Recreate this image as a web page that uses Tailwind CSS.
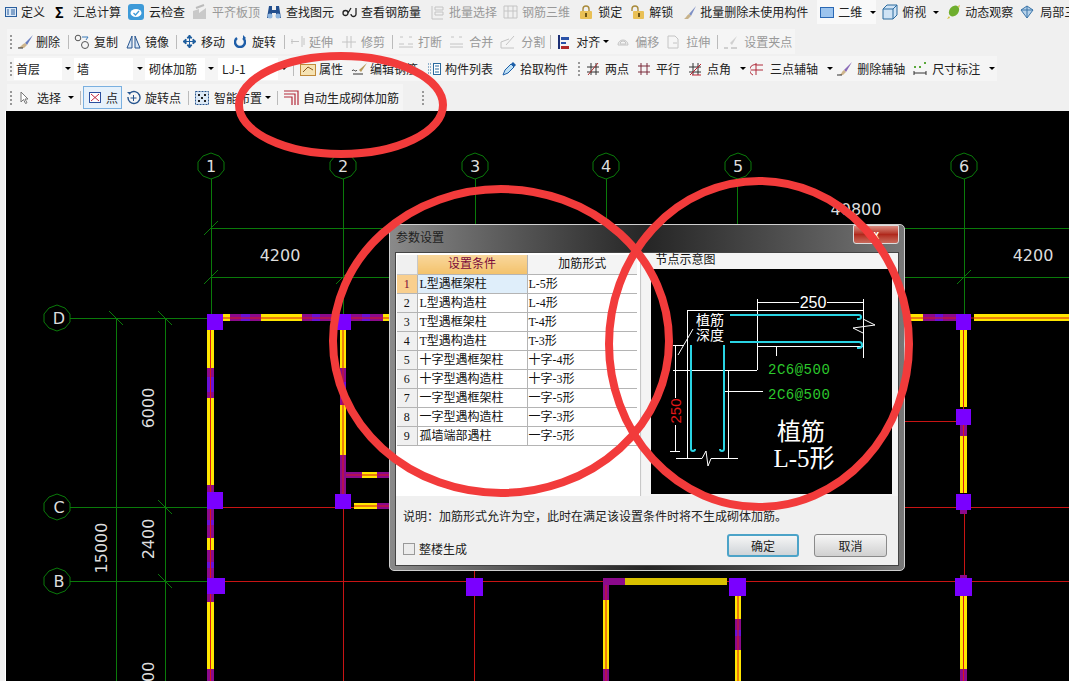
<!DOCTYPE html>
<html lang="zh-CN">
<head>
  <meta charset="UTF-8" />
  <title>参数设置</title>
  <script src="https://cdn.jsdelivr.net/npm/@tailwindcss/browser@4"></script>
</head>
<body class="overflow-hidden bg-[#f0f0f0]">
<div class="relative h-[681px] w-[1069px] overflow-hidden whitespace-nowrap bg-[#f0f0f0] font-['Noto_Sans_CJK_SC',sans-serif] text-[12px] leading-none text-[#222]">

  <!-- Row 1 -->
  <div class="flex h-[24px] items-center">
    <span class="ml-[5px] flex items-center gap-[4px]"><svg width="12" height="12"><rect x=".5" y="1.5" width="11" height="9" fill="#dbe8f6" stroke="#2b5f9e"/><path d="M6 4h4M6 6h4M6 8h4M2 4h2M2 6h2M2 8h2" stroke="#2b5f9e"/></svg>定义</span>
    <span class="ml-[10px] flex items-center gap-[10px]"><span class="w-[8px] text-[14px] font-bold text-black">Σ</span>汇总计算</span>
    <span class="ml-[7px] flex items-center gap-[5px]"><svg width="16" height="16"><rect width="16" height="16" rx="3" fill="#3d9ad8"/><ellipse cx="8" cy="9" rx="5.5" ry="4" fill="#fff"/><path d="M5.500 9l2 2 3.500-4" stroke="#3d9ad8" stroke-width="1.300" fill="none"/></svg>云检查</span>
    <span class="ml-[7px] flex items-center gap-[5px] text-[#999]"><svg width="15" height="16"><path d="M1 15V7l6-2v10zM7 9l7-5v11H7z" fill="#c9c9c9"/><path d="M4 4l8-3" stroke="#bbb" stroke-width="2"/></svg>平齐板顶</span>
    <span class="ml-[6px] flex items-center gap-[4px]"><svg width="16" height="15"><path d="M3 1h3v4h4V1h3l2 12H10V8H6v5H1z" fill="#234f8e"/><circle cx="4" cy="11" r="2.500" fill="#8fb6e0"/><circle cx="12" cy="11" r="2.500" fill="#8fb6e0"/></svg>查找图元</span>
    <span class="ml-[8px] flex items-center gap-[4px]"><svg width="15" height="12"><path d="M1 7a2.500 2.500 0 1 0 5 0a2.500 2.500 0 1 0-5 0M6 7l3-5M9 8a2.500 2.500 0 1 0 5 0V2" stroke="#222" stroke-width="1.300" fill="none"/></svg>查看钢筋量</span>
    <span class="ml-[10px] flex items-center gap-[5px] text-[#999]"><svg width="13" height="15"><path d="M1 1v13h11M4 2h8v3H4zM4 7h8v3H4z" fill="none" stroke="#c4c4c4"/></svg>批量选择</span>
    <span class="ml-[6px] flex items-center gap-[4px] text-[#999]"><svg width="15" height="14"><path d="M1 1h13v12H1zM5 1v12M10 1v12M1 6h13" fill="none" stroke="#c4c4c4"/></svg>钢筋三维</span>
    <span class="ml-[10px] flex items-center gap-[6px]"><svg width="12" height="14"><path d="M3 7V4a3 3 0 0 1 6 0v3" fill="none" stroke="#a98a3a" stroke-width="1.400"/><rect y="6" width="12" height="8" rx="1" fill="#e9c056"/><rect x="5" y="8" width="2" height="4" fill="#6b5314"/></svg>锁定</span>
    <span class="ml-[9px] flex items-center gap-[5px]"><svg width="13" height="14"><path d="M1 6V4a3 3 0 0 1 6 0v3" fill="none" stroke="#a98a3a" stroke-width="1.400"/><rect x="2" y="6" width="11" height="8" rx="1" fill="#e9c056"/><rect x="7" y="8" width="2" height="4" fill="#6b5314"/></svg>解锁</span>
    <span class="ml-[10px] flex items-center gap-[3px]"><svg width="14" height="15"><path d="M13 1L6 9l2 2z" fill="#7d8fc4"/><path d="M6 9l2 2-3 3H1c2-1 2-3 5-5z" fill="#c7b28a"/></svg>批量删除未使用构件</span>
    <span class="ml-[9px] flex h-[24px] w-[60px] items-center bg-[#f9f9f9] pl-[3px]"><svg width="14" height="11" class="mr-[4px]"><rect x=".5" y=".5" width="13" height="10" fill="#9cc4ee" stroke="#2a68b4"/></svg>二维<span class="ml-[8px] h-0 w-0 border-x-[3px] border-t-[3px] border-x-transparent border-t-black"></span></span>
    <span class="ml-[6px] flex items-center gap-[4px]"><svg width="16" height="16"><path d="M1 5l4-4h10v10l-4 4H1z" fill="#cfe3f5" stroke="#2a6a9e"/><path d="M1 5h10v10M11 5l4-4" stroke="#2a6a9e" fill="none"/></svg>俯视</span>
    <span class="ml-[7px] h-0 w-0 border-x-[3px] border-t-[3px] border-x-transparent border-t-black"></span>
    <span class="ml-[7px] flex items-center gap-[4px]"><svg width="15" height="16"><ellipse cx="8" cy="7" rx="4.500" ry="6" transform="rotate(40 8 7)" fill="#6fae2e"/><path d="M3 12l-2 3 3-1zM12 2l2-1-1 3" fill="#d4c23a"/></svg>动态观察</span>
    <span class="ml-[7px] flex items-center gap-[6px]"><svg width="14" height="14"><path d="M7 1l6 4-6 8-6-8z" fill="#b7d2ea" stroke="#3a74a8"/><path d="M1 5h12M7 1v12" stroke="#3a74a8"/></svg>局部三维</span>
  </div>

  <!-- Row 2 -->
  <div class="ml-[7px] mt-[5px] flex h-[25px] w-[788px] items-center bg-[#f5f5f5]">
    <span class="ml-[3px] h-[14px] w-[4px] border-l-2 border-dotted border-[#999]"></span>
    <span class="ml-[3px] flex items-center gap-[2px]"><svg width="17" height="15"><path d="M16 1L8 9l2 2z" fill="#6a7fc0"/><path d="M8 9l2 2-3 3H1c3-1 3-3 7-5z" fill="#cdb48c"/><path d="M1 14h5" stroke="#333"/></svg>删除</span>
    <span class="ml-[8px] h-[14px] w-px bg-[#bbb]"></span>
    <span class="ml-[5px] flex items-center gap-[4px]"><svg width="16" height="16"><circle cx="4" cy="4" r="2.800" fill="none" stroke="#555"/><circle cx="11" cy="11" r="3.500" fill="none" stroke="#555"/><path d="M8 3h6l-2 3" stroke="#3a7ab8" fill="none"/></svg>复制</span>
    <span class="ml-[8px] flex items-center gap-[4px]"><svg width="15" height="15"><path d="M6 2L1 14h5zM9 2l5 12H9z" fill="#dbe8f6" stroke="#27558f"/></svg>镜像</span>
    <span class="ml-[7px] h-[14px] w-px bg-[#bbb]"></span>
    <span class="ml-[5px] flex items-center gap-[4px]"><svg width="15" height="15"><path d="M7.500 1v13M1 7.500h13M7.500 1L5 4h5zM7.500 14L5 11h5zM1 7.500L4 5v5zM14 7.500L11 5v5z" stroke="#1f5e9e" fill="#1f5e9e"/></svg>移动</span>
    <span class="ml-[9px] flex items-center gap-[6px]"><svg width="12" height="13"><path d="M3 3a5 5 0 1 0 6 0" stroke="#1f5ea8" stroke-width="2.400" fill="none"/><path d="M9 0v5l3-2z" fill="#1f5ea8"/></svg>旋转</span>
    <span class="ml-[8px] h-[14px] w-px bg-[#bbb]"></span>
    <span class="ml-[5px] flex items-center gap-[4px] text-[#999]"><svg width="15" height="13"><path d="M1 6.500h8M12 1v11M14 3v7M2 4v5" stroke="#c4c4c4" fill="none"/></svg>延伸</span>
    <span class="ml-[8px] flex items-center gap-[4px] text-[#999]"><svg width="16" height="14"><path d="M1 7h14M6 1v12M10 1v12" stroke="#c4c4c4" fill="none"/></svg>修剪</span>
    <span class="ml-[7px] h-[14px] w-px bg-[#bbb]"></span>
    <span class="ml-[5px] flex items-center gap-[4px] text-[#999]"><svg width="16" height="13"><path d="M1 9h5M10 9h5M2 2h3M11 2h3M1 12h14" stroke="#c4c4c4" fill="none"/></svg>打断</span>
    <span class="ml-[7px] flex items-center gap-[5px] text-[#999]"><svg width="15" height="13"><path d="M1 9h13M2 2h3M10 2h3M1 12h13" stroke="#c4c4c4" fill="none"/></svg>合并</span>
    <span class="ml-[7px] flex items-center gap-[5px] text-[#999]"><svg width="16" height="14"><path d="M1 13h13M1 13V7l8-3M14 1L6 10" stroke="#c4c4c4" fill="none"/></svg>分割</span>
    <span class="ml-[5px] h-[14px] w-px bg-[#bbb]"></span>
    <span class="ml-[7px] flex items-center gap-[7px]"><svg width="11" height="14"><path d="M1 0v14" stroke="#1c2f74" stroke-width="2"/><rect x="3" y="2" width="8" height="3" fill="#2a52a8"/><rect x="3" y="7" width="5" height="2" fill="#2a52a8"/><rect x="3" y="11" width="8" height="3" fill="#b02a2a"/></svg>对齐</span>
    <span class="ml-[3px] h-0 w-0 border-x-[3px] border-t-[3px] border-x-transparent border-t-black"></span>
    <span class="ml-[7px] flex items-center gap-[5px] text-[#999]"><svg width="14" height="13"><path d="M2 10a5 5 0 1 1 10 0z" fill="none" stroke="#c4c4c4"/><path d="M4 9a3 3 0 1 1 6 0z" fill="none" stroke="#c4c4c4"/></svg>偏移</span>
    <span class="ml-[7px] flex items-center gap-[6px] text-[#999]"><svg width="14" height="14"><path d="M2 1h7l3 3v9H2z" fill="none" stroke="#c4c4c4"/><path d="M7 8h4" stroke="#c4c4c4"/></svg>拉伸</span>
    <span class="ml-[7px] h-[14px] w-px bg-[#bbb]"></span>
    <span class="ml-[5px] flex items-center gap-[5px] text-[#999]"><svg width="16" height="14"><path d="M14 1L7 8l2 2z" fill="#d0d0d0"/><path d="M1 13h4M8 13h6" stroke="#aaa"/></svg>设置夹点</span>
  </div>

  <!-- Row 3 -->
  <div class="ml-[7px] mt-[2px] flex h-[25px] w-[990px] items-center bg-[#f5f5f5]">
    <span class="ml-[3px] h-[14px] w-[4px] border-l-2 border-dotted border-[#999]"></span>
    <span class="flex h-[22px] w-[48px] items-center bg-white pl-[2px]">首层</span>
    <span class="ml-[3px] h-0 w-0 border-x-[3px] border-t-[3px] border-x-transparent border-t-black"></span>
    <span class="ml-[3px] flex h-[22px] w-[59px] items-center bg-white pl-[3px]">墙</span>
    <span class="ml-[4px] h-0 w-0 border-x-[3px] border-t-[3px] border-x-transparent border-t-black"></span>
    <span class="ml-[2px] flex h-[22px] w-[60px] items-center bg-white pl-[4px]">砌体加筋</span>
    <span class="ml-[3px] h-0 w-0 border-x-[3px] border-t-[3px] border-x-transparent border-t-black"></span>
    <span class="ml-[4px] flex h-[22px] w-[60px] items-center bg-white pl-[4px]">LJ-1</span>
    <span class="ml-[3px] h-0 w-0 border-x-[3px] border-t-[3px] border-x-transparent border-t-black"></span>
    <span class="ml-[6px] h-[14px] w-px bg-[#bbb]"></span>
    <span class="ml-[6px] flex items-center gap-[3px]"><svg width="16" height="14"><rect x=".5" y="2.500" width="15" height="11" fill="#f6e3b4" stroke="#c08a3a"/><path d="M3 10l5-5 5 3" stroke="#8a5a20" fill="none"/></svg>属性</span>
    <span class="ml-[8px] flex items-center gap-[2px]"><svg width="17" height="13"><path d="M1 9c2-3 3 2 5-1" stroke="#333" fill="none"/><path d="M16 1L8 8l2 2z" fill="#b89a5a"/><path d="M2 12h10" stroke="#333"/></svg>编辑钢筋</span>
    <span class="ml-[9px] flex items-center gap-[4px]"><svg width="14" height="14"><path d="M1 2h3M1 5h3M1 8h3M1 11h3" stroke="#2a6a9e" stroke-dasharray="1 1"/><rect x="6.500" y="1.500" width="7" height="11" fill="#fff" stroke="#2a6a9e"/><path d="M8 4h4M8 7h4M8 10h4" stroke="#2a6a9e"/></svg>构件列表</span>
    <span class="ml-[9px] flex items-center gap-[4px]"><svg width="14" height="15"><path d="M1 14l2-5 6-6 3 3-6 6z" fill="#bfe0f5" stroke="#1d5fa8"/><path d="M9 3l2-2 3 3-2 2z" fill="#1d5fa8"/></svg>拾取构件</span>
    <span class="ml-[10px] h-[14px] w-[4px] border-l-2 border-dotted border-[#999]"></span>
    <span class="ml-[4px] flex items-center gap-[5px]"><svg width="14" height="14"><path d="M5 1v12M10 1v12M1 5h12M1 10h12" stroke="#333" fill="none"/><path d="M2 13L12 1" stroke="#b03030"/></svg>两点</span>
    <span class="ml-[8px] flex items-center gap-[5px]"><svg width="14" height="14"><path d="M4 1v12M10 1v12M1 4h12M1 10h12" stroke="#7a2a3a" fill="none"/></svg>平行</span>
    <span class="ml-[8px] flex items-center gap-[4px]"><svg width="15" height="14"><path d="M5 1v12M10 1v12M1 5h12M1 10h12" stroke="#333" fill="none"/><path d="M2 13L13 2M4 13h9" stroke="#c02030"/></svg>点角</span>
    <span class="ml-[9px] h-0 w-0 border-x-[3px] border-t-[3px] border-x-transparent border-t-black"></span>
    <span class="ml-[4px] flex items-center gap-[6px]"><svg width="14" height="14"><path d="M3 13a4 4 0 0 1 4-10h6M1 8h12M6 1v12" stroke="#b02a3a" fill="none"/></svg>三点辅轴</span>
    <span class="ml-[9px] h-0 w-0 border-x-[3px] border-t-[3px] border-x-transparent border-t-black"></span>
    <span class="ml-[4px] flex items-center gap-[4px]"><svg width="16" height="15"><path d="M15 1L7 9l2 2z" fill="#8a6ab8"/><path d="M7 9l2 2-3 3H2c3-1 2-3 5-5z" fill="#cdb48c"/><path d="M0 14h5" stroke="#333"/></svg>删除辅轴</span>
    <span class="ml-[8px] flex items-center gap-[5px]"><svg width="14" height="14"><path d="M1 9v4M13 9v4M1 11h12" stroke="#333" fill="none"/><path d="M1 5h2M11 1h2M6 5h2" stroke="#5aa83a" stroke-width="2"/></svg>尺寸标注</span>
    <span class="ml-[9px] h-0 w-0 border-x-[3px] border-t-[3px] border-x-transparent border-t-black"></span>
  </div>

  <!-- Row 4 -->
  <div class="ml-[7px] mt-[3px] flex h-[27px] items-center">
    <div class="flex h-[27px] w-[396px] items-center bg-[#f5f5f5]">
      <span class="ml-[3px] h-[14px] w-[4px] border-l-2 border-dotted border-[#999]"></span>
      <span class="ml-[6px] flex items-center gap-[9px]"><svg width="8" height="13"><path d="M1 1v10l2.500-2.500 2 4 1.500-.7-2-3.800h3z" fill="#fff" stroke="#777"/></svg>选择</span>
      <span class="ml-[7px] h-0 w-0 border-x-[3px] border-t-[3px] border-x-transparent border-t-black"></span>
      <span class="ml-[6px] h-[14px] w-px bg-[#bbb]"></span>
      <span class="ml-[2px] flex h-[23px] w-[39px] items-center gap-[4px] border border-[#7ab0e0] bg-[#e6f1fb] pl-[4px]"><svg width="14" height="13"><rect x="1.500" y="1.500" width="11" height="10" fill="#fff" stroke="#2a4f9e"/><path d="M3 3l8 7M11 3l-8 7" stroke="#c02840"/></svg>点</span>
      <span class="ml-[4px] flex items-center gap-[4px]"><svg width="15" height="15"><path d="M4 3a6 6 0 1 1-2 4" stroke="#27558f" stroke-width="1.400" fill="none"/><path d="M7.500 5v6M4.500 8h6" stroke="#27558f"/><path d="M1 2l4 0-1 3z" fill="#27558f"/></svg>旋转点</span>
      <span class="ml-[7px] h-[14px] w-px bg-[#bbb]"></span>
      <span class="ml-[6px] flex items-center gap-[5px]"><svg width="14" height="14"><rect x=".5" y=".5" width="13" height="13" fill="#dbe8f6" stroke="#27558f" stroke-dasharray="2 1"/><path d="M3 3h2v2H3zM9 3h2v2H9zM3 9h2v2H3zM9 9h2v2H9zM6 6h2v2H6z" fill="#222"/></svg>智能布置</span>
      <span class="ml-[3px] h-0 w-0 border-x-[3px] border-t-[3px] border-x-transparent border-t-black"></span>
      <span class="ml-[6px] h-[14px] w-px bg-[#bbb]"></span>
      <span class="ml-[5px] flex items-center gap-[4px]"><svg width="16" height="15"><path d="M1 1h14v14M1 4h11v11M1 7h8v8" stroke="#b42a3a" stroke-width="1.200" fill="none"/></svg>自动生成砌体加筋</span>
    </div>
    <span class="ml-[19px] h-[14px] w-[4px] border-l-2 border-dotted border-[#999]"></span>
  </div>

  <!-- Drawing canvas -->
  <div class="ml-[5px] h-[570px] border-l border-white bg-black">
    <svg width="1063" height="570" viewBox="6 111 1063 570" class="block font-['DejaVu_Sans',sans-serif]">
      <!-- axis lines -->
      <g stroke="#0a7a0a" stroke-width="1" fill="none">
        <path d="M211.500 179V314M343.500 179V314M475.500 179V240M606.500 179V240M737.500 179V240M964.500 179V314"/>
        <path d="M211 228.500H1069M211 277.500H1069"/>
        <path d="M70 318.500H208M70 507.500H208M70 581.500H208"/>
        <path d="M116.500 318V681M165.500 318V681"/>
        <path d="M204 235L218 221M204 284L218 270M336 284L350 270M957 284L971 270"/>
        <path d="M109 311L123 325M158 311L172 325M158 500L172 514M158 574L172 588"/>
        <polygon points="211,153 219,156 224,162 224,170 219,176 211,179 203,176 198,170 198,162 203,156"/>
        <polygon points="343,153 351,156 356,162 356,170 351,176 343,179 335,176 330,170 330,162 335,156"/>
        <polygon points="475,153 483,156 488,162 488,170 483,176 475,179 467,176 462,170 462,162 467,156"/>
        <polygon points="606,153 614,156 619,162 619,170 614,176 606,179 598,176 593,170 593,162 598,156"/>
        <polygon points="738,153 746,156 751,162 751,170 746,176 738,179 730,176 725,170 725,162 730,156"/>
        <polygon points="964,153 972,156 977,162 977,170 972,176 964,179 956,176 951,170 951,162 956,156"/>
        <polygon points="57,305 65,308 70,314 70,322 65,328 57,331 49,328 44,322 44,314 49,308"/>
        <polygon points="57,494 65,497 70,503 70,511 65,517 57,520 49,517 44,511 44,503 49,497"/>
        <polygon points="57,568 65,571 70,577 70,585 65,591 57,594 49,591 44,585 44,577 49,571"/>
      </g>
      <!-- red axis lines -->
      <g stroke="#c81414" stroke-width="1" fill="none">
        <path d="M211 507.500H389M343.500 507V681M211 581.500H1069M905 507.500H1069M474.500 571V681M964.500 510V578M905 421.500H960"/>
      </g>
      <!-- labels -->
      <g fill="#ddd" font-size="16" text-anchor="middle">
        <text x="211" y="172">1</text><text x="343" y="172">2</text><text x="475" y="172">3</text>
        <text x="606" y="172">4</text><text x="738" y="172">5</text><text x="964" y="172">6</text>
        <text x="59" y="324">D</text><text x="59" y="513">C</text><text x="59" y="587">B</text>
        <text x="280" y="261">4200</text><text x="1033" y="261">4200</text><text x="856" y="215">40800</text>
        <text transform="translate(154 408) rotate(-90)">6000</text>
        <text transform="translate(154 539) rotate(-90)">2400</text>
        <text transform="translate(107 548) rotate(-90)">15000</text>
        <text transform="translate(154 682) rotate(-90)">3000</text>
      </g>
      <!-- yellow wall segments -->
      <g fill="#ffe600">
        <rect x="207" y="330" width="7" height="38"/><rect x="207" y="398" width="7" height="87"/>
        <rect x="207" y="538" width="7" height="12"/><rect x="207" y="602" width="7" height="67"/>
        <rect x="223" y="314" width="7" height="7"/><rect x="261" y="314" width="41" height="7"/>
        <rect x="383" y="314" width="6" height="7"/>
        <rect x="340" y="330" width="6" height="38"/><rect x="340" y="405" width="6" height="50"/>
        <rect x="362" y="472" width="15" height="6"/><rect x="354" y="503" width="23" height="6"/>
        <rect x="905" y="314" width="18" height="7"/><rect x="974" y="314" width="95" height="7"/>
        <rect x="960" y="330" width="7" height="77"/><rect x="960" y="436" width="7" height="57"/>
        <rect x="960" y="596" width="7" height="73"/>
        <rect x="603" y="600" width="6" height="69"/><rect x="625" y="578" width="102" height="7" fill="#d8c000"/>
        <rect x="735" y="596" width="6" height="23"/><rect x="735" y="650" width="6" height="31"/>
      </g>
      <!-- purple wall segments -->
      <g fill="#8c0a8c">
        <rect x="207" y="368" width="7" height="30"/><rect x="207" y="485" width="7" height="20"/>
        <rect x="207" y="509" width="7" height="29"/><rect x="207" y="550" width="7" height="28"/>
        <rect x="207" y="594" width="7" height="8"/><rect x="207" y="669" width="7" height="12"/>
        <rect x="230" y="314" width="31" height="7"/><rect x="302" y="314" width="33" height="7"/><rect x="351" y="314" width="32" height="7"/>
        <rect x="340" y="368" width="6" height="37"/><rect x="340" y="455" width="6" height="40"/>
        <rect x="346" y="472" width="16" height="6"/><rect x="377" y="472" width="12" height="6"/><rect x="377" y="503" width="12" height="6"/>
        <rect x="923" y="314" width="33" height="7"/><rect x="960" y="425" width="7" height="11"/>
        <rect x="960" y="510" width="7" height="4"/><rect x="960" y="575" width="7" height="3"/><rect x="960" y="669" width="7" height="12"/>
        <rect x="603" y="578" width="6" height="22"/><rect x="603" y="578" width="22" height="7"/><rect x="603" y="669" width="6" height="12"/>
        <rect x="735" y="619" width="6" height="31"/>
      </g>
      <!-- violet patches in the purple runs -->
      <g fill="#6a10d8">
        <rect x="207" y="377" width="7" height="15"/><rect x="207" y="520" width="7" height="5"/><rect x="207" y="562" width="7" height="6"/>
        <rect x="241" y="314" width="9" height="7"/><rect x="312" y="314" width="8" height="7"/><rect x="362" y="314" width="8" height="7"/>
        <rect x="340" y="382" width="6" height="12"/><rect x="935" y="314" width="8" height="7"/><rect x="735" y="630" width="6" height="6"/>
      </g>
      <!-- red wall centre lines -->
      <path d="M207 318H389M905 318H1069M210.500 330V681M343 330V505M963.500 330V493M963.500 596V681M606 585V681M738 596V681M346 475H389M354 506H389" stroke="#d81818" stroke-width="1" fill="none"/>
      <!-- columns -->
      <g fill="#7a00ff">
        <rect x="207" y="314" width="16" height="16"/><rect x="207" y="492" width="16" height="17"/><rect x="207" y="578" width="18" height="16"/>
        <rect x="335" y="314" width="16" height="16"/><rect x="335" y="494" width="16" height="15"/>
        <rect x="956" y="314" width="15" height="16"/><rect x="956" y="409" width="15" height="16"/><rect x="956" y="494" width="15" height="16"/><rect x="955" y="578" width="17" height="18"/>
        <rect x="466" y="578" width="17" height="18"/><rect x="729" y="578" width="17" height="18"/>
      </g>
    </svg>
  </div>

  <!-- Dialog -->
  <div class="absolute left-[389px] top-[224px] flex h-[347px] w-[516px] flex-col rounded-[5px] border border-[#cfcfcf] bg-linear-to-r from-[#8a8a8a] via-[#262626] to-[#777] px-[5px] pb-[4px]">
    <div class="flex h-[27px] items-center justify-between">
      <span class="ml-[1px] -mt-[3px] text-[#222]">参数设置</span>
      <span class="-mt-[8px] flex h-[19px] w-[46px] items-center justify-center rounded-b-[3px] border border-[#ddd] bg-linear-to-b from-[#d88a80] via-[#b0281c] to-[#c86a5c] text-[11px] font-bold text-white">x</span>
    </div>
    <div class="flex min-h-0 flex-1 flex-col border border-[#444] bg-[#f0f0f0]">
      <div class="flex h-[243px]">
        <!-- condition table -->
        <div class="h-[243px] w-[245px] border-r border-[#c8c8c8] bg-white pl-[1px] pt-[2px]">
          <table class="w-[240px] table-fixed border-collapse font-['Liberation_Serif','Noto_Sans_CJK_SC',serif] text-[12px] text-[#111]">
            <colgroup><col class="w-[20px]" /><col class="w-[110px]" /><col class="w-[110px]" /></colgroup>
            <thead>
              <tr class="h-[19px]">
                <th class="border-b border-r border-[#c8c8c8] bg-[#f0f0f0]"></th>
                <th class="border-b border-r border-[#b4b4b4] bg-linear-to-b from-[#f9d79c] to-[#f3c26b] font-normal text-[#7a0a3a]">设置条件</th>
                <th class="border-b border-[#b4b4b4] bg-[#f4f4f4] font-normal">加筋形式</th>
              </tr>
            </thead>
            <tbody>
              <tr class="h-[19px]"><td class="border-b border-r border-[#b4b4b4] bg-[#f9cf8e] text-center text-[#7a0a3a]">1</td><td class="border-b border-r border-[#b4b4b4] bg-[#dfeefa] pl-[2px]">L型遇框架柱</td><td class="border-b border-[#b4b4b4] pl-[1px]">L-5形</td></tr>
              <tr class="h-[19px]"><td class="border-b border-r border-[#b4b4b4] bg-[#f0f0f0] text-center">2</td><td class="border-b border-r border-[#b4b4b4] pl-[2px]">L型遇构造柱</td><td class="border-b border-[#b4b4b4] pl-[1px]">L-4形</td></tr>
              <tr class="h-[19px]"><td class="border-b border-r border-[#b4b4b4] bg-[#f0f0f0] text-center">3</td><td class="border-b border-r border-[#b4b4b4] pl-[2px]">T型遇框架柱</td><td class="border-b border-[#b4b4b4] pl-[1px]">T-4形</td></tr>
              <tr class="h-[19px]"><td class="border-b border-r border-[#b4b4b4] bg-[#f0f0f0] text-center">4</td><td class="border-b border-r border-[#b4b4b4] pl-[2px]">T型遇构造柱</td><td class="border-b border-[#b4b4b4] pl-[1px]">T-3形</td></tr>
              <tr class="h-[19px]"><td class="border-b border-r border-[#b4b4b4] bg-[#f0f0f0] text-center">5</td><td class="border-b border-r border-[#b4b4b4] pl-[2px]">十字型遇框架柱</td><td class="border-b border-[#b4b4b4] pl-[1px]">十字-4形</td></tr>
              <tr class="h-[19px]"><td class="border-b border-r border-[#b4b4b4] bg-[#f0f0f0] text-center">6</td><td class="border-b border-r border-[#b4b4b4] pl-[2px]">十字型遇构造柱</td><td class="border-b border-[#b4b4b4] pl-[1px]">十字-3形</td></tr>
              <tr class="h-[19px]"><td class="border-b border-r border-[#b4b4b4] bg-[#f0f0f0] text-center">7</td><td class="border-b border-r border-[#b4b4b4] pl-[2px]">一字型遇框架柱</td><td class="border-b border-[#b4b4b4] pl-[1px]">一字-5形</td></tr>
              <tr class="h-[19px]"><td class="border-b border-r border-[#b4b4b4] bg-[#f0f0f0] text-center">8</td><td class="border-b border-r border-[#b4b4b4] pl-[2px]">一字型遇构造柱</td><td class="border-b border-[#b4b4b4] pl-[1px]">一字-3形</td></tr>
              <tr class="h-[19px]"><td class="border-b border-r border-[#b4b4b4] bg-[#f0f0f0] text-center">9</td><td class="border-b border-r border-[#b4b4b4] pl-[2px]">孤墙端部遇柱</td><td class="border-b border-[#b4b4b4] pl-[1px]">一字-5形</td></tr>
            </tbody>
          </table>
        </div>
        <!-- node diagram -->
        <div class="ml-[1px] flex h-[243px] w-[257px] flex-col bg-[#f4f4f4]">
          <div class="h-[16px] pl-[14px] text-[12px] leading-[12px] text-[#111]">节点示意图</div>
          <div class="ml-[9px] h-[225px] w-[241px] bg-black">
            <svg width="241" height="225" viewBox="651 268 241 225" class="block">
              <g stroke="#fff" stroke-width="1" fill="none">
                <path d="M687.500 309.500H863M687.500 309V457M757.500 298V369M687 369.500H757M757 301.500H799M827 301.500H863M863.500 298V357M757 345.500H863"/>
                <path d="M673 369.500H690M673 344.500H684M675.500 344V397M675.500 424V450M670 450.500H680M728.500 369V457"/>
                <path d="M676 457.500H702L706 450L708 465L711 457.500H738M678 354L693 328"/>
                <path d="M776.500 345V355M725 390.500H763M863 318L875 324L853 327L863 332"/>
              </g>
              <g stroke="#2ad4e4" stroke-width="2" fill="none">
                <path d="M730 314H859a2 2 0 0 1 0 4h-2M730 341H859a3 3 0 0 1 0 6h-2"/>
                <path d="M691 344V448a2 2 0 0 0 4 0M724 344V448a2 2 0 0 1-4 0"/>
              </g>
              <g fill="#fff" text-anchor="middle" font-family="'Noto Sans CJK SC',sans-serif">
                <text x="710" y="324" font-size="14">植筋</text>
                <text x="710" y="339" font-size="14">深度</text>
                <text x="813" y="307" font-size="16" font-family="'Liberation Sans',sans-serif">250</text>
                <text x="801" y="439" font-size="24" font-family="'Liberation Serif','Noto Sans CJK SC',serif">植筋</text>
                <text x="804" y="466" font-size="25" font-family="'Liberation Serif','Noto Sans CJK SC',serif">L-5形</text>
              </g>
              <g fill="#2cc82c" font-size="14" font-family="'Liberation Mono',monospace">
                <text x="768" y="373" letter-spacing=".5">2C6@500</text>
                <text x="768" y="398" letter-spacing=".5">2C6@500</text>
              </g>
              <text transform="translate(681 410) rotate(-90)" fill="#e01818" font-size="15" text-anchor="middle" font-family="'Liberation Sans',sans-serif">250</text>
            </svg>
          </div>
        </div>
      </div>
      <div class="ml-[7px] mt-[14px] text-[#222]">说明：加筋形式允许为空，此时在满足该设置条件时将不生成砌体加筋。</div>
      <div class="flex flex-1 items-start">
        <label class="ml-[7px] mt-[21px] flex items-center gap-[4px]"><span class="h-[12px] w-[12px] border border-[#999] bg-[#ececec]"></span>整楼生成</label>
        <button class="ml-[260px] mt-[12px] h-[23px] w-[72px] rounded-[3px] border-2 border-[#4ca3c8] bg-linear-to-b from-[#f6f6f6] to-[#cfd4d8] text-[12px] text-[#222]">确定</button>
        <button class="ml-[15px] mt-[12px] h-[23px] w-[73px] rounded-[3px] border border-[#8a8a8a] bg-linear-to-b from-[#f6f6f6] to-[#d0d0d0] text-[12px] text-[#222]">取消</button>
      </div>
    </div>
  </div>

  <!-- Hand-drawn red annotation rings -->
  <svg class="pointer-events-none absolute inset-0" width="1069" height="681" fill="none" stroke="#f23b3b" stroke-width="8">
    <ellipse cx="341" cy="105" rx="102" ry="49"/>
    <ellipse cx="501" cy="341" rx="168" ry="152"/>
    <ellipse cx="759" cy="344" rx="150" ry="163"/>
  </svg>
</div>
</body>
</html>
